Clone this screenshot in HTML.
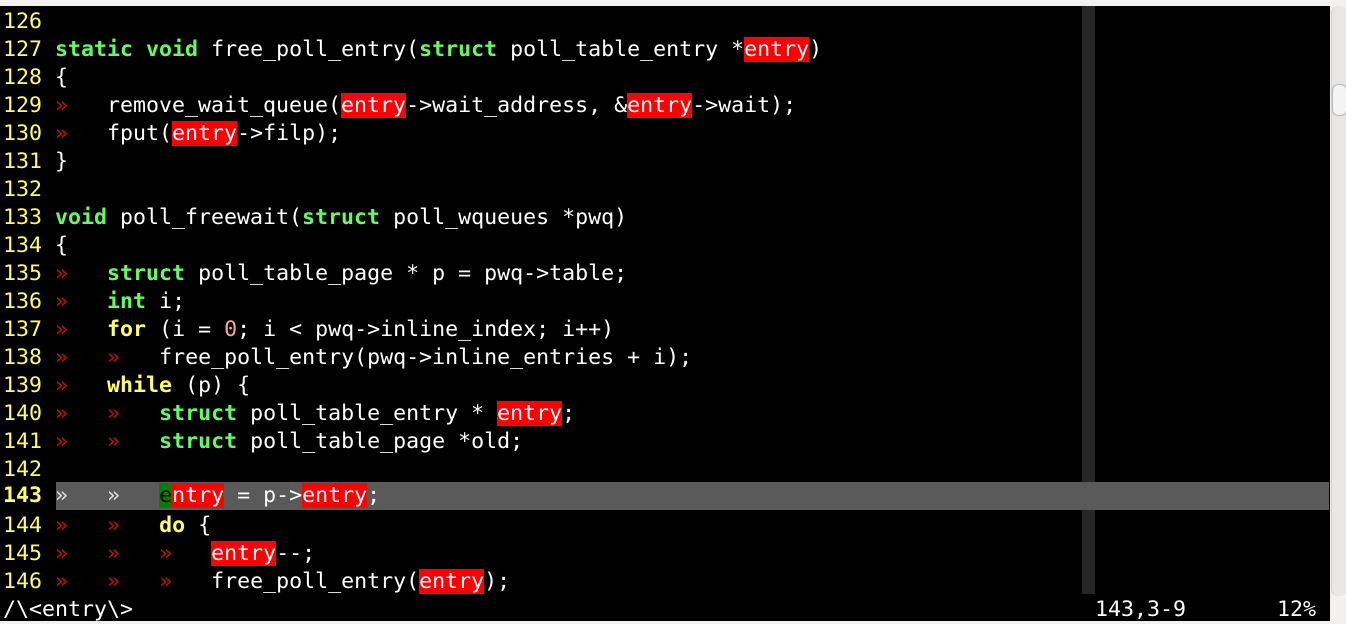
<!DOCTYPE html>
<html><head><meta charset="utf-8"><style>
body{margin:0;width:1346px;height:621px;overflow:hidden;background:#f2f1f0;position:relative}
#ed{position:absolute;left:0;top:6px;width:1330px;height:615px;background:#000}
#cc{position:absolute;left:1082px;top:0;width:13px;height:588px;background:#262626}
#cl{position:absolute;left:56px;top:476px;width:1273px;height:28px;background:#5a5a5a}
.l{position:absolute;left:3px;margin-top:2px;height:28px;line-height:28px;white-space:pre;font-family:"DejaVu Sans Mono","Liberation Mono",monospace;font-size:21.6px;color:#fff}
.n{color:#ffff60}
.g{color:#60ff60;font-weight:bold}
.y{color:#ffff60;font-weight:bold}
.t{color:#c01010}
.r{background:#ff0000;color:#fff}
.num{color:#ffa0a0}
#sb{position:absolute;left:1331px;top:6px;width:15px;height:590px;background:#e8e7e6;border-left:1px solid #cfcfcf;border-radius:7px}
#th{position:absolute;left:1332px;top:84px;width:13px;height:30px;background:#f4f4f4;border:1px solid #b8b8b8;border-radius:6px}
</style></head><body>
<div id="ed">
<div id="cc"></div>
<div id="cl"></div>
<div class="l" style="top:0"><span class="n">126 </span></div>
<div class="l" style="top:28px"><span class="n">127 </span><span class="g">static</span> <span class="g">void</span> free_poll_entry(<span class="g">struct</span> poll_table_entry *<span class="r">entry</span>)</div>
<div class="l" style="top:56px"><span class="n">128 </span>{</div>
<div class="l" style="top:84px"><span class="n">129 </span><span class="t">»</span>   remove_wait_queue(<span class="r">entry</span>-&gt;wait_address, &amp;<span class="r">entry</span>-&gt;wait);</div>
<div class="l" style="top:112px"><span class="n">130 </span><span class="t">»</span>   fput(<span class="r">entry</span>-&gt;filp);</div>
<div class="l" style="top:140px"><span class="n">131 </span>}</div>
<div class="l" style="top:168px"><span class="n">132 </span></div>
<div class="l" style="top:196px"><span class="n">133 </span><span class="g">void</span> poll_freewait(<span class="g">struct</span> poll_wqueues *pwq)</div>
<div class="l" style="top:224px"><span class="n">134 </span>{</div>
<div class="l" style="top:252px"><span class="n">135 </span><span class="t">»</span>   <span class="g">struct</span> poll_table_page * p = pwq-&gt;table;</div>
<div class="l" style="top:280px"><span class="n">136 </span><span class="t">»</span>   <span class="g">int</span> i;</div>
<div class="l" style="top:308px"><span class="n">137 </span><span class="t">»</span>   <span class="y">for</span> (i = <span class="num">0</span>; i &lt; pwq-&gt;inline_index; i++)</div>
<div class="l" style="top:336px"><span class="n">138 </span><span class="t">»</span>   <span class="t">»</span>   free_poll_entry(pwq-&gt;inline_entries + i);</div>
<div class="l" style="top:364px"><span class="n">139 </span><span class="t">»</span>   <span class="y">while</span> (p) {</div>
<div class="l" style="top:392px"><span class="n">140 </span><span class="t">»</span>   <span class="t">»</span>   <span class="g">struct</span> poll_table_entry * <span class="r">entry</span>;</div>
<div class="l" style="top:420px"><span class="n">141 </span><span class="t">»</span>   <span class="t">»</span>   <span class="g">struct</span> poll_table_page *old;</div>
<div class="l" style="top:448px"><span class="n">142 </span></div>
<div class="l" style="top:474px"><span class="n" style="font-weight:bold">143 </span><span style="color:#ddd">»</span>   <span style="color:#ddd">»</span>   <span style="background:#008000;color:#000">e</span><span class="r">ntry</span> = p-&gt;<span class="r">entry</span>;</div>
<div class="l" style="top:504px"><span class="n">144 </span><span class="t">»</span>   <span class="t">»</span>   <span class="y">do</span> {</div>
<div class="l" style="top:532px"><span class="n">145 </span><span class="t">»</span>   <span class="t">»</span>   <span class="t">»</span>   <span class="r">entry</span>--;</div>
<div class="l" style="top:560px"><span class="n">146 </span><span class="t">»</span>   <span class="t">»</span>   <span class="t">»</span>   free_poll_entry(<span class="r">entry</span>);</div>
<div class="l" style="top:588px">/\&lt;entry\&gt;</div>
<div class="l" style="top:588px;left:1095px">143,3-9</div>
<div class="l" style="top:588px;left:1277px">12%</div>
</div>
<div id="sb"></div>
<div id="th"></div>
</body></html>
